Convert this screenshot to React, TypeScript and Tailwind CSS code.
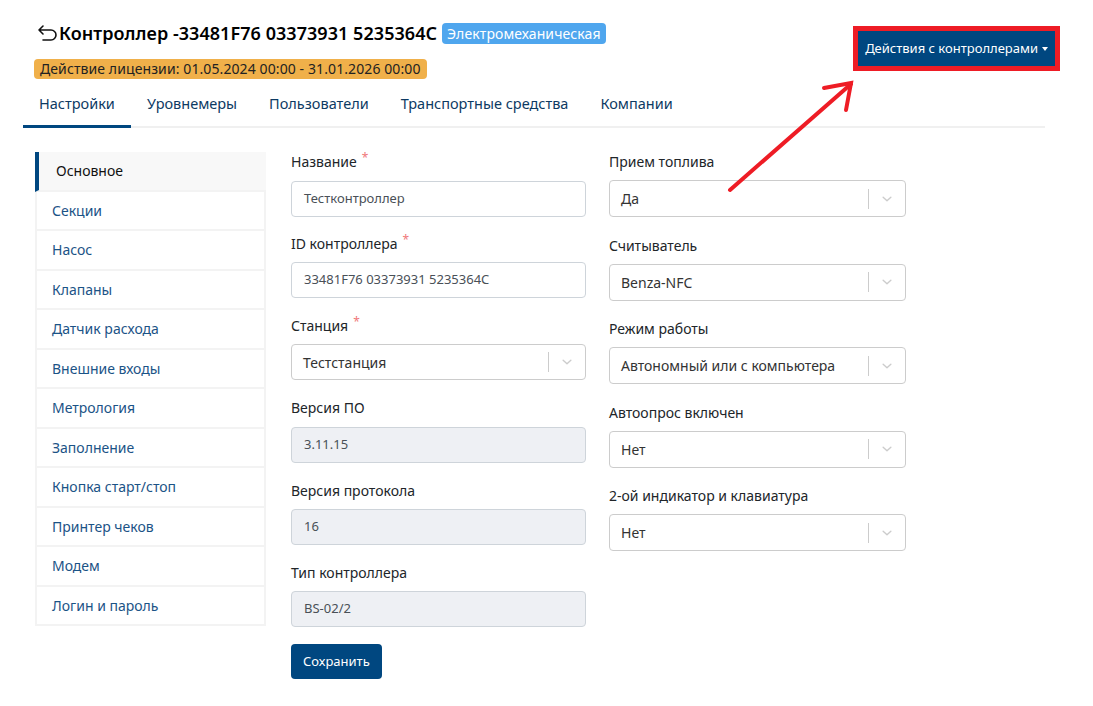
import React from "react";

const sideItems = [
  "Основное",
  "Секции",
  "Насос",
  "Клапаны",
  "Датчик расхода",
  "Внешние входы",
  "Метрология",
  "Заполнение",
  "Кнопка старт/стоп",
  "Принтер чеков",
  "Модем",
  "Логин и пароль",
];

const tabs = ["Настройки", "Уровнемеры", "Пользователи", "Транспортные средства", "Компании"];

function Label({ text, req }: { text: string; req?: boolean }) {
  return (
    <div className="h-[20px] flex items-center text-[14px] text-[#212529] leading-[20px]">
      {text}
      {req && <span className="text-[#f0787a] text-[12px] ml-[5px] -mt-[8px]">*</span>}
    </div>
  );
}

function TextInput({ value, disabled }: { value: string; disabled?: boolean }) {
  return (
    <div
      className={
        "h-[36px] rounded-[4px] border border-[#ced4da] flex items-center pl-[12px] text-[13px] text-[#495057] " +
        (disabled ? "bg-[#eef0f4]" : "bg-white")
      }
    >
      {value}
    </div>
  );
}

function Select({ value, h = 37 }: { value: string; h?: number }) {
  return (
    <div
      className="rounded-[4px] border border-[#cccccc] bg-white flex items-center text-[14px] text-[#333333]"
      style={{ height: h }}
    >
      <div className="flex-1 pl-[11px]">{value}</div>
      <div className="w-px h-[20px] bg-[#cccccc]" />
      <div className="w-[36px] flex items-center justify-center">
        <svg width="14" height="14" viewBox="0 0 20 20">
          <path
            d="M4.5 7.5 L10 12.5 L15.5 7.5"
            fill="none"
            stroke="#cccccc"
            strokeWidth="2"
            strokeLinecap="round"
            strokeLinejoin="round"
          />
        </svg>
      </div>
    </div>
  );
}

export default function App() {
  return (
    <div
      className="relative w-[1093px] h-[706px] bg-white overflow-hidden"
      style={{ fontFamily: '"Noto Sans", "Open Sans", sans-serif' }}
    >
      {/* header */}
      <div className="flex justify-between pl-[34px] pr-[33px] pt-[21px]">
        <div>
          <div className="flex items-center h-[24px]">
            <svg width="22" height="20" viewBox="0 0 22 20" className="ml-[3px]">
              <path
                d="M6 3 L2 7 L6 11 M2 7 H14 A5 5 0 0 1 14 17 H6"
                fill="none"
                stroke="#111"
                strokeWidth="1.6"
                strokeLinecap="round"
                strokeLinejoin="round"
              />
            </svg>
            <span className="text-[18px] font-semibold text-black tracking-[0.05px]">
              Контроллер -33481F76 03373931 5235364C
            </span>
            <span className="ml-[5px] bg-[#4fa6ee] text-white text-[14px] rounded-[4px] px-[5px] h-[21px] leading-[21px] tracking-[0.1px]">
              Электромеханическая
            </span>
          </div>
          <div className="mt-[11px]">
            <span className="inline-block bg-[#f0b04a] text-[#222] text-[14px] rounded-[4px] px-[6px] h-[20px] leading-[20px] tracking-[0.1px]">
              Действие лицензии: 01.05.2024 00:00 - 31.01.2026 00:00
            </span>
          </div>
        </div>
        <div className="mt-[5px] border-[5px] border-[#ee1c25] h-[45px]">
          <button className="h-[35px] bg-[#004780] text-white text-[13px] px-[7px] flex items-center">
            Действия с контроллерами
            <span className="ml-[4px] inline-block w-0 h-0 border-l-[3px] border-r-[3px] border-t-[4px] border-l-transparent border-r-transparent border-t-white" />
          </button>
        </div>
      </div>

      {/* tabs */}
      <div className="ml-[23px] mr-[48px] mt-[4px] flex border-b-2 border-[#f0f0f0]">
        {tabs.map((t, i) => (
          <div
            key={t}
            className={
              "px-[16px] pt-[8px] pb-[11px] text-[14.5px] leading-[22px] -mb-[2px] border-b-[3px] " +
              (i === 0 ? "border-[#004780] text-[#0d3a63]" : "border-transparent text-[#0d3a63]")
            }
          >
            {t}
          </div>
        ))}
      </div>

      {/* content */}
      <div className="flex pl-[35px] pt-[24px]">
        <div className="w-[231px] flex flex-col">
          {sideItems.map((s, i) => (
            <div
              key={s}
              className={
                "h-[39.5px] flex items-center text-[14px] border-b-2 border-[#f3f3f3] " +
                (i === 0
                  ? "bg-[#f8f8f8] border-l-[4px] border-l-[#004780] pl-[17px] text-[#111]"
                  : "bg-white border-l-2 border-l-[#f3f3f3] border-r-2 border-r-[#f3f3f3] pl-[15px] text-[#1b5386]")
              }
            >
              {s}
            </div>
          ))}
        </div>

        <div className="ml-[25px] w-[295px] flex flex-col">
          <Label text="Название" req />
          <div className="mt-[9px]">
            <TextInput value="Тестконтроллер" />
          </div>
          <div className="mt-[17px]">
            <Label text="ID контроллера" req />
          </div>
          <div className="mt-[8px]">
            <TextInput value="33481F76 03373931 5235364C" />
          </div>
          <div className="mt-[18px]">
            <Label text="Станция" req />
          </div>
          <div className="mt-[8px]">
            <Select value="Тестстанция" h={36} />
          </div>
          <div className="mt-[18px]">
            <Label text="Версия ПО" />
          </div>
          <div className="mt-[9px]">
            <TextInput value="3.11.15" disabled />
          </div>
          <div className="mt-[18px]">
            <Label text="Версия протокола" />
          </div>
          <div className="mt-[8px]">
            <TextInput value="16" disabled />
          </div>
          <div className="mt-[18px]">
            <Label text="Тип контроллера" />
          </div>
          <div className="mt-[8px]">
            <TextInput value="BS-02/2" disabled />
          </div>
          <div className="mt-[17px]">
            <button className="h-[35px] px-[12px] rounded-[4px] bg-[#004780] text-white text-[13px]">
              Сохранить
            </button>
          </div>
        </div>

        <div className="ml-[23px] w-[297px] flex flex-col">
          {[
            ["Прием топлива", "Да"],
            ["Считыватель", "Benza-NFC"],
            ["Режим работы", "Автономный или с компьютера"],
            ["Автоопрос включен", "Нет"],
            ["2-ой индикатор и клавиатура", "Нет"],
          ].map(([l, v], i) => (
            <div key={l} className={i === 0 ? "" : "mt-[18.5px]"}>
              <Label text={l} />
              <div className="mt-[8px]">
                <Select value={v} />
              </div>
            </div>
          ))}
        </div>
      </div>

      {/* annotation arrow */}
      <svg className="absolute left-0 top-0 pointer-events-none" width="1093" height="706">
        <g stroke="#ee1c25" strokeWidth="4" strokeLinecap="round" fill="none">
          <path d="M730 190 L851 84" />
          <path d="M824 88 L851 83 L846 110" />
        </g>
      </svg>
    </div>
  );
}
